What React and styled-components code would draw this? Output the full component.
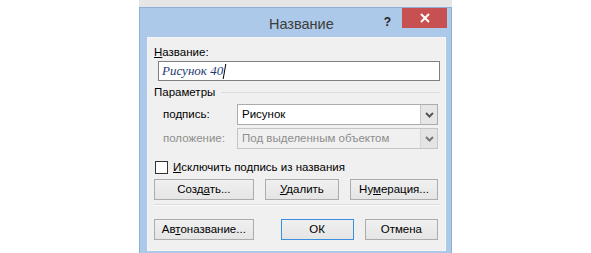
import React from "react"
import styled, { createGlobalStyle } from "styled-components"

const GlobalStyle = createGlobalStyle`
  html, body {
    margin: 0;
    padding: 0;
    background: #ffffff;
    font-family: "Liberation Sans", Arial, sans-serif;
    font-size: 11.5px;
    color: #000;
  }
`

const Stage = styled.div`
  padding-left: 139px;
  width: 313px;
`

const TopStrip = styled.div`
  height: 7px;
  background: #e6e6e6;
`

const Window = styled.div`
  background: #adc9e9;
  border: 1px solid #8faed4;
  border-bottom: none;
  padding: 0 5px 4px 7px;
`

const TitleBar = styled.div`
  display: flex;
  align-items: flex-start;
  height: 29px;
`

const Title = styled.div`
  flex: 1;
  text-align: center;
  padding: 2px 0 0 72px;
  font-size: 14.5px;
  line-height: 28px;
  color: #3c3c3c;
`

const HelpButton = styled.div`
  font-weight: bold;
  font-size: 12px;
  line-height: 28px;
  color: #222;
  margin-right: 11px;
`

const CloseButton = styled.div`
  width: 45px;
  height: 20px;
  margin-right: -1px;
  background: #c75050;
  display: flex;
  align-items: center;
  justify-content: center;
`

const Panel = styled.div`
  background: #f0f0f0;
  border: 1px solid #f6f6f6;
  padding: 7px 5px 10px 6px;
  display: flex;
  flex-direction: column;
`

const Label = styled.div`
  line-height: 15px;
  color: ${({ disabled }) => (disabled ? "#8d8d8d" : "#000")};
`

const TextField = styled.div`
  margin: 1px 0 0 4px;
  height: 18px;
  border: 1px solid #7f7f7f;
  background: #fff;
  display: flex;
  align-items: center;
  padding-left: 3px;
  font-family: "Liberation Serif", "Times New Roman", serif;
  font-style: italic;
  font-size: 13px;
  color: #1f3b73;
`

const Caret = styled.span`
  display: inline-block;
  width: 1px;
  height: 15px;
  margin-left: 1px;
  background: #000;
  transform: skewX(-10deg);
`

const GroupHeader = styled.div`
  display: flex;
  align-items: center;
  margin-top: 4px;
  line-height: 14px;
`

const GroupLine = styled.div`
  flex: 1;
  height: 1px;
  margin-left: 6px;
  background: #dcdcdc;
`

const FieldRow = styled.div`
  display: grid;
  grid-template-columns: 74px 1fr;
  align-items: center;
  margin-top: ${({ first }) => (first ? "5px" : "3px")};
  padding-left: 9px;
  padding-right: 2px;
`

const Select = styled.div`
  display: flex;
  height: 19px;
  border: 1px solid ${({ disabled }) => (disabled ? "#c6c6c6" : "#acacac")};
  background: ${({ disabled }) => (disabled ? "#f0f0f0" : "#fff")};
  color: ${({ disabled }) => (disabled ? "#8d8d8d" : "#000")};
`

const SelectValue = styled.div`
  flex: 1;
  padding-left: 4px;
  line-height: 19px;
`

const SelectArrow = styled.div`
  width: 16px;
  border-left: 1px solid ${({ disabled }) => (disabled ? "#d4d4d4" : "#c8c8c8")};
  background: ${({ disabled }) => (disabled ? "#e4e4e4" : "#e6e6e6")};
  display: flex;
  align-items: center;
  justify-content: center;
`

const CheckRow = styled.div`
  display: flex;
  align-items: center;
  margin-top: 11px;
  line-height: 15px;
`

const CheckBox = styled.div`
  width: 11px;
  height: 11px;
  border: 1px solid #333;
  background: #fff;
  margin: 0 5px 0 1px;
`

const ButtonRow = styled.div`
  display: flex;
  gap: 11px;
  margin-top: ${({ top }) => top}px;
  padding-right: 2px;
`

const Button = styled.div`
  width: ${({ w }) => w}px;
  height: 19px;
  line-height: 19px;
  text-align: center;
  border: 1px solid ${({ primary }) => (primary ? "#3c8fdc" : "#acacac")};
  background: linear-gradient(#f0f0f0, #e5e5e5);
  margin-left: ${({ offset }) => offset || 0}px;
`

const Separator = styled.div`
  height: 1px;
  margin-top: 4px;
  background: #dcdcdc;
  border-bottom: 1px solid #fafafa;
`

const Chevron = ({ color }) => (
  <svg width="9" height="6" viewBox="0 0 9 6">
    <path d="M1 1 L4.5 4.5 L8 1" fill="none" stroke={color} strokeWidth="2" />
  </svg>
)

export default function App() {
  return (
    <>
      <GlobalStyle />
      <Stage>
        <TopStrip />
        <Window>
          <TitleBar>
            <Title>Название</Title>
            <HelpButton>?</HelpButton>
            <CloseButton>
              <svg width="10" height="10" viewBox="0 0 10 10">
                <path d="M1 1 L9 9 M9 1 L1 9" stroke="#fff" strokeWidth="2" />
              </svg>
            </CloseButton>
          </TitleBar>
          <Panel>
            <Label>
              <u>Н</u>азвание:
            </Label>
            <TextField>
              Рисунок 40
              <Caret />
            </TextField>
            <GroupHeader>
              Параметры
              <GroupLine />
            </GroupHeader>
            <FieldRow first>
              <Label>
                по<u>д</u>пись:
              </Label>
              <Select>
                <SelectValue>Рисунок</SelectValue>
                <SelectArrow>
                  <Chevron color="#555" />
                </SelectArrow>
              </Select>
            </FieldRow>
            <FieldRow>
              <Label disabled>положение:</Label>
              <Select disabled>
                <SelectValue>Под выделенным объектом</SelectValue>
                <SelectArrow disabled>
                  <Chevron color="#777" />
                </SelectArrow>
              </Select>
            </FieldRow>
            <CheckRow>
              <CheckBox />
              <span>
                <u>И</u>сключить подпись из названия
              </span>
            </CheckRow>
            <ButtonRow top={4}>
              <Button w={100}>
                Созд<u>а</u>ть...
              </Button>
              <Button w={74}>
                <u>У</u>далить
              </Button>
              <Button w={88}>
                Ну<u>м</u>ерация...
              </Button>
            </ButtonRow>
            <Separator />
            <ButtonRow top={13}>
              <Button w={100}>
                Ав<u>т</u>оназвание...
              </Button>
              <Button w={73} primary offset={16}>
                ОК
              </Button>
              <Button w={73}>Отмена</Button>
            </ButtonRow>
          </Panel>
        </Window>
      </Stage>
    </>
  )
}
